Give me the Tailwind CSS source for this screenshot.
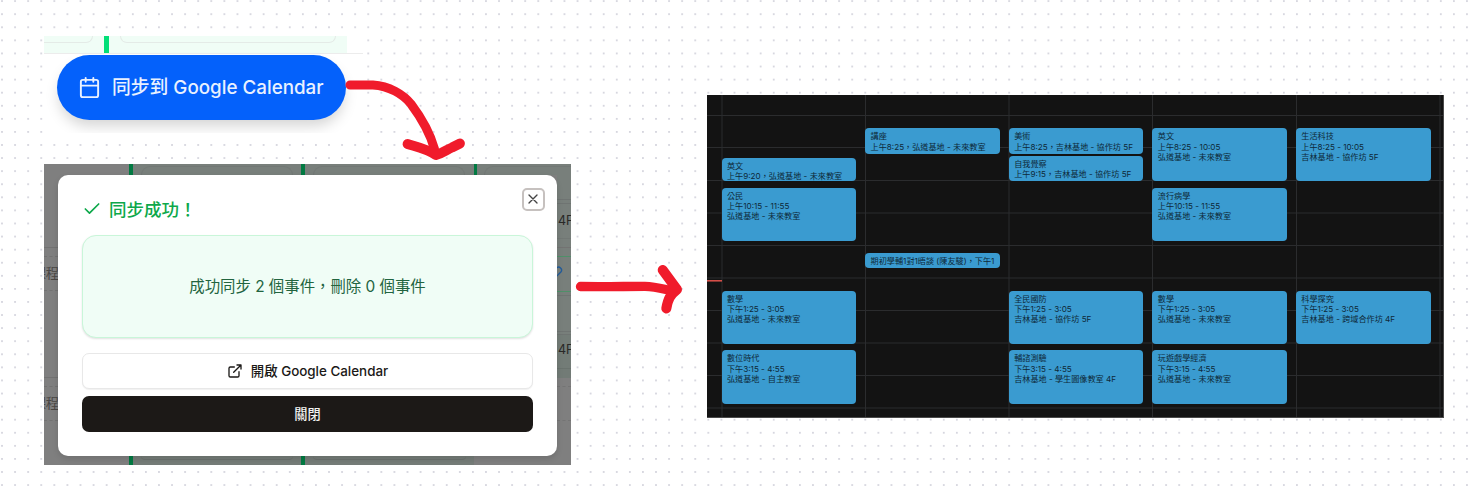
<!DOCTYPE html>
<html>
<head>
<meta charset="utf-8">
<title>Google Calendar 同步</title>
<script src="https://cdn.jsdelivr.net/npm/@tailwindcss/browser@4"></script>
</head>
<body class="bg-white font-['Inter','Noto_Sans_CJK_TC',sans-serif]">
<main class="relative w-[1470px] h-[486px] overflow-hidden bg-white">

  <!-- dotted canvas -->
  <svg class="absolute inset-0" width="1470" height="486">
    <defs><pattern id="dots" width="13.08" height="13.08" patternUnits="userSpaceOnUse" x="1.1" y="0.2"><rect width="1.8" height="1.8" fill="#d5d5de"/></pattern></defs>
    <rect width="1470" height="486" fill="url(#dots)"/>
  </svg>

  <!-- sync button fragment -->
  <section class="absolute left-[44px] top-[36px] w-[319px] h-[97px] bg-white overflow-hidden flex flex-col">
    <div class="flex h-[17px] w-[303px] shrink-0 bg-[#f0fdf6]">
      <div class="w-[49px] h-[7px] rounded-br-[10px] border-b-[1.5px] border-r border-[#e4ebe7]"></div>
      <div class="ml-[11px] w-[5px] h-full bg-[#02df78]"></div>
      <div class="ml-[11px] w-[216px] h-[7px] rounded-b-[10px] border border-t-0 border-[#e4ebe7]"></div>
    </div>
    <div class="h-px w-full shrink-0 bg-[#ececec]"></div>
    <button class="ml-[13px] mt-[0.5px] flex h-[65.5px] w-[289px] shrink-0 items-center rounded-full bg-[#0461fb] pl-[21px] text-[#e9f1ff] shadow-[0_8px_14px_-2px_rgba(0,0,0,0.17)]">
      <svg class="h-[23px] w-[23px]" viewBox="0 0 24 24" fill="none" stroke="currentColor" stroke-width="2" stroke-linecap="round" stroke-linejoin="round"><path d="M8 2v4M16 2v4M3 10h18"/><rect x="3" y="4" width="18" height="18" rx="2"/></svg>
      <span class="ml-[11px] whitespace-nowrap pt-[3px] text-[18.8px] font-medium leading-none">同步到 Google Calendar</span>
    </button>
  </section>

  <!-- dialog fragment -->
  <section class="absolute left-[44px] top-[164px] flex h-[301px] w-[526.5px] flex-col overflow-hidden bg-[#7f7f7f]">
    <div class="flex h-[11px] shrink-0">
      <div class="w-[85px] shrink-0"></div>
      <div class="w-[3.5px] shrink-0 bg-[#027a42]"></div>
      <div class="w-[168.5px] shrink-0 bg-[#787f7b] pl-[8px] pt-[2px]"><div class="h-[9px] w-[152px] rounded-t-[10px] border border-b-0 border-[#727875]"></div></div>
      <div class="w-[3.5px] shrink-0 bg-[#027a42]"></div>
      <div class="w-[169px] shrink-0 bg-[#787f7b] pl-[8px] pt-[2px]"><div class="h-[9px] w-[152px] rounded-t-[10px] border border-b-0 border-[#727875]"></div></div>
      <div class="w-[3.5px] shrink-0 bg-[#027a42]"></div>
      <div class="min-w-0 flex-1 bg-[#787f7b] pl-[7px] pt-[2px]"><div class="h-[9px] w-full rounded-tl-[10px] border-l border-t border-[#727875]"></div></div>
    </div>
    <div class="flex h-[281px] shrink-0">
      <div class="flex w-[14px] shrink-0 flex-col overflow-hidden pt-[72px] text-[13.2px] text-[#4a4745]">
        <div class="h-[9px] border-t border-[#727272]"></div>
        <div class="flex h-[35px] items-center justify-end border-y border-dashed border-[#727272] whitespace-nowrap"><span class="-mr-[1px]">課程</span></div>
        <div class="mt-[86px] h-[9px] border-t border-[#727272]"></div>
        <div class="flex h-[35px] items-center justify-end border-y border-dashed border-[#727272] whitespace-nowrap"><span class="-mr-[1px]">課程</span></div>
      </div>
      <div class="relative z-10 flex w-[499px] shrink-0 flex-col rounded-[10px] bg-white px-[24px] shadow-[0_3px_6px_rgba(0,0,0,0.12)]">
        <div class="flex h-[59.5px] shrink-0 justify-between">
          <h2 class="flex h-[26px] items-center text-[17.5px] font-semibold text-[#0da84a] mt-[21px]">
            <svg class="mr-[7px] h-[20px] w-[20px]" viewBox="0 0 24 24" fill="none" stroke="currentColor" stroke-width="2" stroke-linecap="round" stroke-linejoin="round"><path d="M20 6 9 17l-5-5"/></svg>
            <span class="pt-[1px] leading-none font-medium">同步成功！</span>
          </h2>
          <button class="-mr-[12px] mt-[12.5px] flex h-[23px] w-[23.5px] items-center justify-center rounded-[5px] border-2 border-[#c6c1bf] text-[#444]">
            <svg class="h-[16px] w-[16px] shrink-0" viewBox="0 0 24 24" fill="none" stroke="currentColor" stroke-width="2" stroke-linecap="round"><path d="M18 6 6 18M6 6l12 12"/></svg>
          </button>
        </div>
        <div class="flex h-[103.5px] shrink-0 items-center justify-center rounded-[14px] border border-[#c9f6d9] bg-[#f0fdf6] text-[15.4px] text-[#22643f] shadow-[0_1px_2px_rgba(0,0,0,0.12)]"><span class="whitespace-nowrap leading-none">成功同步 2 個事件，刪除 0 個事件</span></div>
        <button class="mt-[15px] flex h-[36px] shrink-0 items-center justify-center rounded-[7px] border border-[#e8e8e8] bg-white text-[13.4px] font-medium text-[#1b1917] shadow-[0_1px_1px_rgba(0,0,0,0.06)]">
          <svg class="mr-[8px] h-[16px] w-[16px]" viewBox="0 0 24 24" fill="none" stroke="currentColor" stroke-width="2" stroke-linecap="round" stroke-linejoin="round"><path d="M15 3h6v6M10 14 21 3M18 13v6a2 2 0 0 1-2 2H5a2 2 0 0 1-2-2V8a2 2 0 0 1 2-2h6"/></svg>
          <span class="whitespace-nowrap pt-[2px] leading-none">開啟 Google Calendar</span>
        </button>
        <button class="mt-[7px] flex h-[36px] shrink-0 items-center justify-center rounded-[7px] bg-[#1c1917] pt-[2px] text-[13.2px] font-medium leading-none text-[#f3f2f1]">關閉</button>
      </div>
      <div class="flex min-w-0 flex-1 flex-col overflow-hidden bg-[#7f7f7f] text-[12.5px] text-[#292827]">
        <div class="h-[25px] shrink-0 border-b border-[#6f7472] bg-[#787f7b]"></div>
        <div class="h-[4px] shrink-0 border-b border-[#6f7472] bg-[#787f7b]"></div>
        <div class="flex h-[35px] shrink-0 items-center border-b border-[#727875] bg-[#787f7b] pl-[1px]">4F</div>
        <div class="h-[9px] shrink-0 border-b border-[#737372] bg-[#787f7b]"></div>
        <div class="h-[8px] shrink-0 bg-[#787f7b]"></div>
        <div class="h-[36px] shrink-0 border-y border-[#4f9069] bg-[#787f7b] pt-[8px]">
          <svg class="-ml-[7px] h-[13px] w-[13px]" viewBox="0 0 24 24" fill="none" stroke="#225c9c" stroke-width="2.6"><path d="M12 21 4 13A5.5 5.5 0 0 1 12 5.500a5.500 5.500 0 0 1 8 7.500z"/></svg>
        </div>
        <div class="h-[4px] shrink-0 border-b border-[#6f7472] bg-[#787f7b]"></div>
        <div class="h-[35px] shrink-0 bg-[#787f7b]"></div>
        <div class="h-[4px] shrink-0 border-y border-[#6f7472] bg-[#787f7b]"></div>
        <div class="flex h-[34px] shrink-0 items-center border-b border-[#6a736e] bg-[#737c77] pb-[2px] pl-[1px]">4F</div>
        <div class="h-[9px] shrink-0 bg-[#727b76]"></div>
        <div class="mt-[8px] h-[35px] shrink-0 border-y border-dashed border-[#747474]"></div>
      </div>
    </div>
    <div class="flex h-[9px] shrink-0">
      <div class="w-[85px]"></div>
      <div class="w-[3.5px] bg-[#027a42]"></div>
      <div class="w-[168.5px] bg-[#757c78] px-[8px]"><div class="h-[4px] rounded-b-[8px] border-b border-[#6b716e]"></div></div>
      <div class="w-[3.5px] bg-[#027a42]"></div>
      <div class="w-[169px] bg-[#757c78] px-[8px]"><div class="h-[4px] rounded-b-[8px] border-b border-[#6b716e]"></div></div>
    </div>
  </section>

  <!-- calendar fragment -->
  <section class="absolute left-[707px] top-[95px] h-[322.5px] w-[736.5px] overflow-hidden border-r border-b border-[#4a4a4a] bg-[#131313]">
    <svg class="absolute inset-0" width="737" height="323" fill="none" stroke="#2b2c2e" stroke-width="1">
      <path d="M0 20.500h737M0 52.500h737M0 85.500h737M0 118h737M0 150.500h737M0 183h737M0 215.500h737M0 248h737M0 280.500h737M0 313h737M15 0v323M158.500 0v323M302 0v323M445.500 0v323M589.500 0v323M733 0v323"/>
      <path d="M0 185.800h15" stroke="#e0524b" stroke-width="1.500"/>
    </svg>
    <div id="week" class="relative flex gap-[9.1px] pl-[14.700px] text-[8.150px] leading-[10.200px] text-[#0e2938]"></div>
  </section>

  <!-- hand-drawn arrows -->
  <svg class="absolute inset-0" width="1470" height="486" fill="none" stroke="#f01b2b" stroke-linecap="round" stroke-linejoin="round">
    <path stroke-width="9" d="M350 85 L373 85 C389 86 403 94 411 104 C420 116 430 133 434.500 149"/>
    <path stroke-width="9.800" d="M407.500 144 C415 146.500 425 148 436 155 C443 153 447 149.500 452 147.500 L460 143.500"/>
    <path stroke-width="9.300" d="M580.500 286.500 C605 287 625 286.300 645 286.300 C656 286.500 665 289.500 673 291"/>
    <path stroke-width="10" d="M662.700 270 L677 289.500 C670 295 668 299 666.300 308.500"/>
  </svg>
</main>

<template id="event">
  <article class="shrink-0 overflow-hidden whitespace-nowrap rounded-[4px] bg-[#3a9bd0] pl-[5.300px] pt-[3px]"></article>
</template>
<script>
// Each event: top and height inside the grid (px), then its text lines.
const days = [
  [[63.300,23.200,'英文','上午9:20，弘道基地 - 未來教室'],[93,53,'公民','上午10:15 - 11:55','弘道基地 - 未來教室'],[196,53,'數學','下午1:25 - 3:05','弘道基地 - 未來教室'],[255.500,53.200,'數位時代','下午3:15 - 4:55','弘道基地 - 自主教室']],
  [[33.400,26.100,'講座','上午8:25，弘道基地 - 未來教室'],[158,15,'期初學輔1對1晤談 (陳友駿)，下午1']],
  [[33.400,26,'美術','上午8:25，吉林基地 - 協作坊 5F'],[60.600,25.800,'自我覺察','上午9:15，吉林基地 - 協作坊 5F'],[196,53,'全民國防','下午1:25 - 3:05','吉林基地 - 協作坊 5F'],[255.500,53.200,'輔諮測驗','下午3:15 - 4:55','吉林基地 - 學生圖像教室 4F']],
  [[33.400,53,'英文','上午8:25 - 10:05','弘道基地 - 未來教室'],[93,53,'流行病學','上午10:15 - 11:55','弘道基地 - 未來教室'],[196,53,'數學','下午1:25 - 3:05','弘道基地 - 未來教室'],[255.500,53.200,'玩遊戲學經濟','下午3:15 - 4:55','弘道基地 - 未來教室']],
  [[33.400,53,'生活科技','上午8:25 - 10:05','吉林基地 - 協作坊 5F'],[196,53,'科學探究','下午1:25 - 3:05','吉林基地 - 跨域合作坊 4F']]
];
const week = document.getElementById('week');
const template = document.getElementById('event');
for (const day of days) {
  const column = document.createElement('div');
  column.className = 'flex w-[134.5px] shrink-0 flex-col';
  let bottom = 0;
  for (const [top, height, ...lines] of day) {
    const card = template.content.firstElementChild.cloneNode(true);
    card.style.marginTop = (top - bottom) + 'px';
    card.style.height = height + 'px';
    for (const line of lines) {
      const row = document.createElement('div');
      row.className = 'h-[10.2px]';
      row.textContent = line;
      card.append(row);
    }
    column.append(card);
    bottom = top + height;
  }
  week.append(column);
}
</script>
</body>
</html>
